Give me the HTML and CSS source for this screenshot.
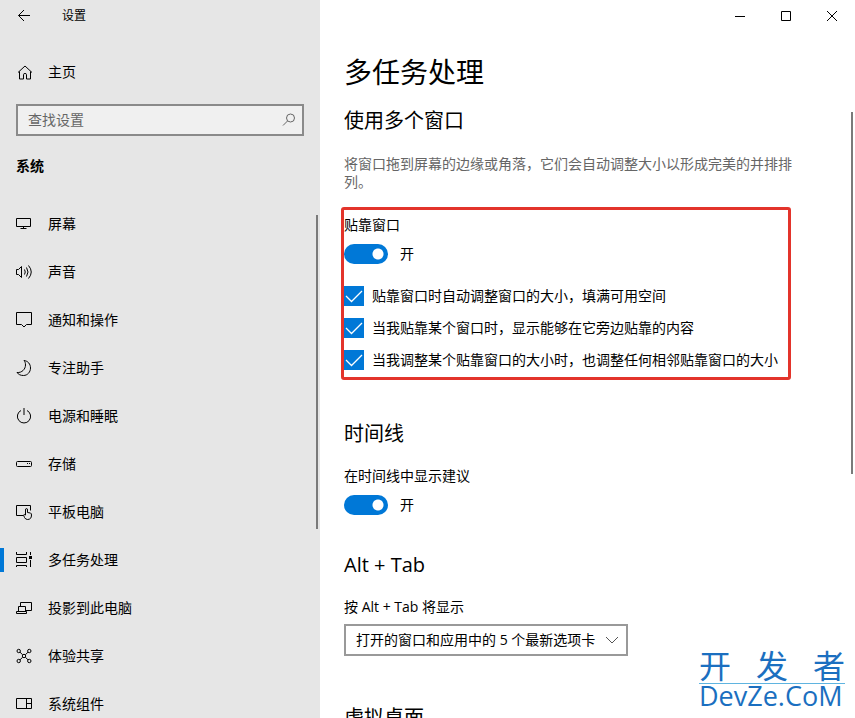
FILE: index.html
```html
<!DOCTYPE html>
<html lang="zh-CN">
<head>
    <meta charset="UTF-8">
    <meta name="viewport" content="width=device-width, initial-scale=1.0">
    <title>设置</title>
    <link rel="stylesheet" href="styles.css">
</head>
<body>
    <div class="window">
        <aside class="sidebar">
            <header class="titlebar">
                <button class="back-btn" type="button" aria-label="返回">
                    <svg class="icon" viewBox="0 0 16 16"><path d="M14 7.5H2.5M8 2L2.5 7.5L8 13"/></svg>
                </button>
                <span class="app-name">设置</span>
            </header>

            <a class="home-link" href="#">
                <svg class="icon" viewBox="0 0 16 16"><path d="M2 8.5L9 2L16 8.5M3.500 7.500V15H7.500V10.500Q7.500 9.500 9 9.500T10.500 10.500V15H14.500V7.500"/></svg>
                主页
            </a>

            <div class="search">
                <input class="search-input" type="text" placeholder="查找设置" aria-label="查找设置">
                <svg class="search-icon" viewBox="0 0 16 16"><circle cx="9.5" cy="6" r="4"/><path d="M6.5 9L2 13.5"/></svg>
            </div>

            <h2 class="nav-title">系统</h2>
            <nav class="nav">
                <a class="nav-item" href="#">
                    <svg class="icon" viewBox="0 0 16 16"><path d="M.5 2.5H14.5V10.5H.5ZM7.5 10.5V12.5M4.5 12.5H10.5"/></svg>
                    屏幕
                </a>
                <a class="nav-item" href="#">
                    <svg class="icon" viewBox="0 0 16 16"><path d="M.5 5.5H2.5L5.500 2.500V13.500L2.5 10.5H.5ZM8.5 5.5Q10 8 8.5 10.5M10.5 3.500Q13.500 8 10.5 12.500M12.5 1.500Q18 8 12.5 14.500"/></svg>
                    声音
                </a>
                <a class="nav-item" href="#">
                    <svg class="icon" viewBox="0 0 16 16"><path d="M.5 .5H15.5V12.5H10.5L8 15L5.5 12.5H.5Z"/></svg>
                    通知和操作
                </a>
                <a class="nav-item" href="#">
                    <svg class="icon" viewBox="0 0 16 16"><path d="M8 .5C12 1 14.5 4 14.5 8C14.5 12 11.5 15.5 7.5 15.5C4.5 15.5 2.5 14.5 1 12.5C6 13 9.5 9 9.5 5C9.5 3 9 1.5 8 .5Z"/></svg>
                    专注助手
                </a>
                <a class="nav-item" href="#">
                    <svg class="icon" viewBox="0 0 16 16"><path d="M5 2.5A6.6 6.6 0 1 0 11 2.5M8 0V7"/></svg>
                    电源和睡眠
                </a>
                <a class="nav-item" href="#">
                    <svg class="icon" viewBox="0 0 16 16"><rect x=".5" y="5.5" width="15" height="5" rx="1"/><path d="M11 7.5H12M13 7.5H14"/></svg>
                    存储
                </a>
                <a class="nav-item" href="#">
                    <svg class="icon" viewBox="0 0 16 16"><path d="M7 11.5H.5V1.5H14.5V6.5M9.5 11V6Q9.5 4.5 10.5 4.5T11.5 6V8.5L14.5 9Q15.5 9.5 15.5 11Q15.5 15.5 11.5 15.5Q9.5 15.5 8.5 13.5L7.5 11Q8 10 9.5 11"/></svg>
                    平板电脑
                </a>
                <a class="nav-item active" href="#">
                    <svg class="icon" viewBox="0 0 16 16"><path d="M.5 0V2.5H10.5V0M.5 5.5H10.5V10.5H.5ZM.5 15V13.5H10.5V15M14.5 0V3M14.5 8V15"/><path class="solid" d="M13 4H16V7H13Z"/></svg>
                    多任务处理
                </a>
                <a class="nav-item" href="#">
                    <svg class="icon" viewBox="0 0 16 16"><path d="M4.5 6V2.5H15.5V10.5H10M2.5 11V6.5H9.5V11M.5 11.5H10.5V13.5H.5Z"/></svg>
                    投影到此电脑
                </a>
                <a class="nav-item" href="#">
                    <svg class="icon" viewBox="0 0 16 16"><circle cx="2.7" cy="3" r="1.7"/><circle cx="13.3" cy="3" r="1.7"/><circle cx="2.7" cy="13" r="1.7"/><circle cx="13.3" cy="13" r="1.7"/><circle cx="8" cy="8" r="1.7"/><path d="M4 4.2L6.7 6.8M12 4.2L9.3 6.8M4 11.8L6.7 9.2M12 11.8L9.3 9.2"/></svg>
                    体验共享
                </a>
                <a class="nav-item" href="#">
                    <svg class="icon" viewBox="0 0 16 16"><path d="M.5 2.5H15.5V12.5H.5ZM10.5 2.5V12.5M10.5 7.5H15.5"/></svg>
                    系统组件
                </a>
            </nav>
            <div class="scroll-thumb nav-thumb"></div>
        </aside>

        <main class="content">
            <div class="window-controls">
                <button type="button" aria-label="最小化"><svg class="icon" viewBox="0 0 16 16"><path d="M3 8.5H13"/></svg></button>
                <button type="button" aria-label="最大化"><svg class="icon" viewBox="0 0 16 16"><path d="M3.5 3.5H12.5V12.5H3.5Z"/></svg></button>
                <button type="button" aria-label="关闭"><svg class="icon" viewBox="0 0 16 16"><path d="M3 3L13 13M13 3L3 13"/></svg></button>
            </div>

            <div class="page">
                <h1>多任务处理</h1>

                <section>
                    <h2>使用多个窗口</h2>
                    <p class="description">将窗口拖到屏幕的边缘或角落，它们会自动调整大小以形成完美的并排排列。</p>
                    <div class="highlight">
                        <label class="field-label" for="snap">贴靠窗口</label>
                        <div class="toggle-row">
                            <input class="toggle" type="checkbox" id="snap" checked>
                            <span>开</span>
                        </div>
                        <div class="checks">
                            <label class="check"><input type="checkbox" checked>贴靠窗口时自动调整窗口的大小，填满可用空间</label>
                            <label class="check"><input type="checkbox" checked>当我贴靠某个窗口时，显示能够在它旁边贴靠的内容</label>
                            <label class="check"><input type="checkbox" checked>当我调整某个贴靠窗口的大小时，也调整任何相邻贴靠窗口的大小</label>
                        </div>
                    </div>
                </section>

                <section>
                    <h2>时间线</h2>
                    <label class="field-label" for="timeline">在时间线中显示建议</label>
                    <div class="toggle-row">
                        <input class="toggle" type="checkbox" id="timeline" checked>
                        <span>开</span>
                    </div>
                </section>

                <section>
                    <h2>Alt + Tab</h2>
                    <label class="field-label" for="alt-tab">按 Alt + Tab 将显示</label>
                    <select class="dropdown" id="alt-tab">
                        <option>打开的窗口和应用中的 5 个最新选项卡</option>
                    </select>
                </section>

                <section>
                    <h2>虚拟桌面</h2>
                </section>
            </div>
            <div class="scroll-thumb page-thumb"></div>
        </main>

        <div class="watermark">
            <div class="watermark-top"><span>开</span><span>发</span><span>者</span></div>
            <div class="watermark-bottom">DevZe.CoM</div>
        </div>
    </div>
</body>
</html>
```

FILE: styles.css
```css
* {
    box-sizing: border-box;
}
body {
    margin: 0;
    font-family: "Open Sans", "Noto Sans CJK SC", sans-serif;
    font-size: 14px;
    line-height: 20px;
    color: #000;
    background: #fff;
}
h1, h2, p {
    margin: 0;
    font-weight: normal;
}
button, input, select {
    font: inherit;
    color: inherit;
    margin: 0;
}
button {
    padding: 0;
    border: 0;
    background: none;
}
a {
    color: inherit;
    text-decoration: none;
}
.window {
    position: relative;
    display: flex;
    height: 100vh;
    overflow: hidden;
}
.icon {
    display: block;
    flex: none;
    width: 16px;
    height: 16px;
    fill: none;
    stroke: #000;
    overflow: visible;
}
.icon .solid {
    fill: #000;
    stroke: none;
}

/* sidebar */
.sidebar {
    position: relative;
    flex: none;
    width: 320px;
    background: #e6e6e6;
}
.titlebar {
    display: flex;
    align-items: center;
    gap: 30px;
    height: 32px;
    padding: 0 16px;
    font-size: 12px;
}
.home-link {
    display: flex;
    align-items: center;
    gap: 16px;
    height: 48px;
    margin-top: 16px;
    padding: 0 16px;
}
.search {
    display: flex;
    align-items: center;
    height: 32px;
    margin: 8px 16px 20px;
    padding: 0 5px 0 10px;
    border: 2px solid #8a8a8a;
    background: #f0f0f0;
}
.search-input {
    flex: 1;
    min-width: 0;
    padding: 0;
    border: 0;
    outline: 0;
    background: none;
}
.search-input::placeholder {
    color: #666;
}
.search-icon {
    width: 16px;
    height: 16px;
    fill: none;
    stroke: #666;
}
.nav-title {
    padding: 0 16px;
    font-size: 14px;
    line-height: 20px;
    font-weight: bold;
}
.nav {
    margin-top: 24px;
}
.nav-item {
    display: flex;
    align-items: center;
    gap: 16px;
    height: 48px;
    padding: 0 16px;
}
.nav-item.active {
    background: linear-gradient(#0078d7, #0078d7) left center / 4px 24px no-repeat;
}
.scroll-thumb {
    position: absolute;
    width: 2px;
    background: #7a7a7a;
}
.nav-thumb {
    top: 215px;
    right: 2px;
    height: 314px;
}
.page-thumb {
    top: 112px;
    right: 2px;
    height: 362px;
}

/* content */
.content {
    position: relative;
    flex: 1;
    min-width: 0;
}
.window-controls {
    display: flex;
    justify-content: flex-end;
}
.window-controls button {
    display: grid;
    place-items: center;
    width: 46px;
    height: 32px;
}
.page {
    padding: 20px 24px;
}
h1 {
    font-size: 28px;
    line-height: 40px;
}
section {
    margin-bottom: 36px;
}
section h2 {
    margin-bottom: 18px;
    font-size: 20px;
    line-height: 28px;
}
h1 + section {
    margin-top: 15px;
}
.description {
    max-width: 456px;
    margin: 20px 0 16px;
    line-height: 18px;
    color: #666;
}
.highlight {
    max-width: 450px;
    margin: 0 0 40px -3px;
    padding: 5px 0 7px;
    border: 3px solid #e3342b;
    border-radius: 3px;
}
.field-label {
    display: block;
    margin-bottom: 7px;
}
.toggle-row {
    display: flex;
    align-items: center;
    gap: 12px;
    padding-top: 2px;
}
.toggle {
    appearance: none;
    width: 44px;
    height: 20px;
    border-radius: 10px;
    background: radial-gradient(circle at 34px 10px, #fff 5px, #0078d7 6px);
}
.checks {
    display: grid;
    gap: 12px;
    margin-top: 22px;
}
.check {
    display: flex;
    align-items: center;
    gap: 8px;
    white-space: nowrap;
}
.check input {
    appearance: none;
    width: 20px;
    height: 20px;
    background: #0078d7 url("data:image/svg+xml,%3Csvg xmlns='http://www.w3.org/2000/svg' viewBox='0 0 20 20'%3E%3Cpath d='M2 10l5.500 5.500L18 5' fill='none' stroke='white' stroke-width='1.300'/%3E%3C/svg%3E");
}
.dropdown {
    appearance: none;
    display: block;
    width: 284px;
    max-width: 100%;
    height: 32px;
    margin-bottom: 48px;
    padding: 0 28px 0 10px;
    border: 2px solid #999;
    border-radius: 0;
    background: #fff url("data:image/svg+xml,%3Csvg xmlns='http://www.w3.org/2000/svg' viewBox='0 0 12 8'%3E%3Cpath d='M0 1l6 6l6-6' fill='none' stroke='%23555'/%3E%3C/svg%3E") right 8px center / 12px 8px no-repeat;
}

/* site mark over the corner */
.watermark {
    position: absolute;
    right: 10px;
    bottom: 10px;
    width: 146px;
    color: #1b6fc0;
}
.watermark-top {
    display: flex;
    justify-content: space-between;
    padding-bottom: 3px;
    border-bottom: 1px solid #5fb4e0;
    font-size: 32px;
    line-height: 28px;
}
.watermark-bottom {
    font-size: 27px;
    line-height: 24px;
}
```
